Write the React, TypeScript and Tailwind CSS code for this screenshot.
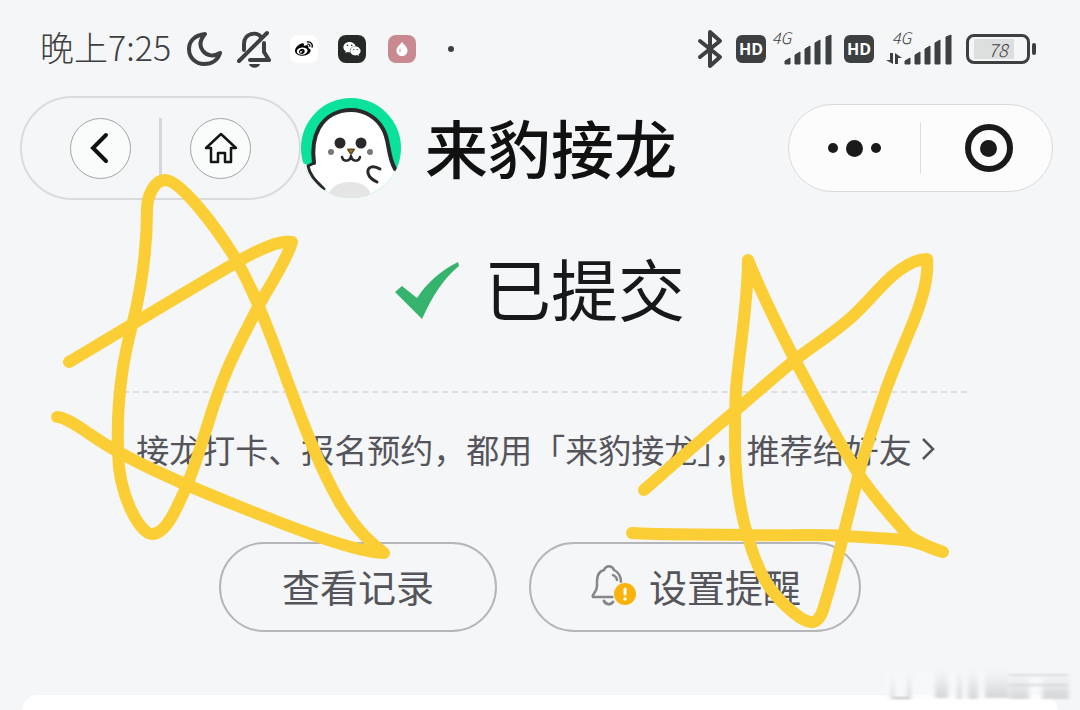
import React from 'react';
import { FaWeibo, FaWeixin } from 'react-icons/fa';

const MoonIcon = () => (
  <svg viewBox="0 0 36 36" className="h-9 w-9" fill="none" stroke="#3d4041" strokeWidth="4" strokeLinejoin="round">
    <path d="M19 3 C9 4 3 10 3 18 C3 27 10 33 18 33 C26 33 32 29 34 22 C28 26 21 25 17 20 C13 15 14 9 19 3 Z" />
  </svg>
);

const BellOffIcon = () => (
  <svg viewBox="0 0 36 40" className="h-10 w-9" fill="none" stroke="#3d4041" strokeWidth="4" strokeLinecap="round">
    <path d="M8 21 V15 C8 4 21 2 25 8" />
    <path d="M3 32 L31 4" />
    <path d="M28 14 V23 L33 31 H14" strokeLinejoin="round" />
    <path d="M13 35 H24 C23 40 14 40 13 35 Z" fill="#3d4041" stroke="none" />
  </svg>
);

const BluetoothIcon = () => (
  <svg viewBox="0 0 26 40" className="h-10 w-7" fill="none" stroke="#3d4041" strokeWidth="4" strokeLinejoin="round" strokeLinecap="round">
    <path d="M3 12 L23 28 L13 37 V3 L23 12 L3 28" />
  </svg>
);

const HdBadge = () => (
  <span className="flex h-7 w-[30px] items-center justify-center rounded-md bg-[#3d4041] font-['Open_Sans',sans-serif] text-base font-bold text-white">
    HD
  </span>
);

const SignalBars = () => (
  <svg viewBox="0 0 48 32" className="h-8 w-12" fill="#3d4041" stroke="#3d4041" strokeLinejoin="round">
    <path d="M1 31 V28 L6 25 V31 Z" />
    <path d="M11 31 V22 L16 19 V31 Z" />
    <path d="M21 31 V16 L26 13 V31 Z" />
    <path d="M31 31 V10 L36 7 V31 Z" />
    <path d="M42 31 V4 L47 2 V31 Z" />
  </svg>
);

const Signal: React.FC<{ arrows?: boolean }> = ({ arrows }) => (
  <div className={`relative flex items-end ${arrows ? 'ml-3' : 'ml-[18px]'}`}>
    <span className={`absolute -top-1 text-base leading-4 italic font-light ${arrows ? 'left-1.5' : '-left-3'}`}>4G</span>
    {arrows && (
      <svg viewBox="0 0 18 12" className="h-3 w-[18px]" fill="#3d4041">
        <path d="M4 0 H7 V11 L0 7 H4 Z" />
        <path d="M9 11 V0 L16 5 H12 V11 Z" />
      </svg>
    )}
    <SignalBars />
  </div>
);

const StatusBar = () => (
  <div className="flex h-[97px] items-center justify-between pr-11 pl-10 text-[#3d4041]">
    <div className="flex items-center">
      <span className="w-[146px] pb-1 text-[34px] leading-10 font-light whitespace-nowrap">晚上7:25</span>
      <MoonIcon />
      <span className="ml-3.5"><BellOffIcon /></span>
      <span className="ml-[18px] flex h-7 w-7 items-center justify-center rounded-lg bg-white text-black">
        <FaWeibo size={18} />
      </span>
      <span className="ml-5 flex h-7 w-7 items-center justify-center rounded-lg bg-[#252827] text-white">
        <FaWeixin size={18} />
      </span>
      <span className="ml-[22px] flex h-7 w-7 items-center justify-center rounded-lg bg-[#c98991]">
        <svg viewBox="0 0 12 14" className="h-3.5 w-3" fill="white">
          <path d="M6 0 C8 3 11.500 5 11.500 8.500 C11.500 12 9 14 6 14 C3 14 .5 12 .5 8.500 C.5 5 4 3 6 0 Z" />
          <path d="M4 7 V10" stroke="#c98991" />
        </svg>
      </span>
      <span className="ml-8 h-1.5 w-1.5 rounded-full bg-[#3d4041]" />
    </div>
    <div className="flex items-center">
      <BluetoothIcon />
      <span className="ml-3"><HdBadge /></span>
      <Signal />
      <span className="ml-3"><HdBadge /></span>
      <Signal arrows />
      <div className="ml-3.5 flex h-[30px] w-16 items-center justify-center rounded-lg border-3 border-[#3d4041]">
        <span className="mr-2 w-10 bg-[#dddede] pl-2 text-center text-lg leading-5 italic font-light">78</span>
      </div>
      <span className="ml-0.5 h-3 w-1 rounded-full bg-[#3d4041]" />
    </div>
  </div>
);

const SealAvatar = () => (
  <svg viewBox="0 0 100 100" className="h-[100px] w-[100px] shrink-0">
    <defs>
      <clipPath id="avatar">
        <circle cx="50" cy="50" r="50" />
      </clipPath>
    </defs>
    <g clipPath="url(#avatar)" fill="none" stroke="#29292b" strokeLinecap="round" strokeLinejoin="round">
      <rect width="100" height="100" fill="#0ae19a" stroke="none" />
      <path
        d="M-4 62 L8 68 L13 64 C11 50 13 39 18 30 C25 18 37 12 50 12 C64 12 76 20 82 31 C89 43 86 57 95 71 L110 75 V110 H-10 Z"
        fill="#fff"
        stroke="none"
      />
      <path d="M13 65 C11 50 13 39 18 30 C25 18 37 12 50 12 C64 12 76 20 82 31 C89 43 86 57 94 71" strokeWidth="4" />
      <path d="M13 65 L7 68 C9 78 15 83 23 91" strokeWidth="3" />
      <circle cx="39" cy="45" r="5.500" fill="#29292b" stroke="none" />
      <circle cx="60" cy="45" r="5.500" fill="#29292b" stroke="none" />
      <circle cx="30" cy="54" r="3" fill="#77777b" stroke="none" />
      <circle cx="69" cy="54" r="3" fill="#77777b" stroke="none" />
      <path d="M47 51.500 H53 L50 56 Z" fill="#c9983c" stroke="#6c5225" strokeWidth="2" />
      <path d="M41 59 C42 64 49 64 50 58 C51 64 58 64 59 59" strokeWidth="2.500" />
      <path d="M79 71 C71 66 66 70 67 75 C68 80 72 82 76 84" strokeWidth="3" />
      <ellipse cx="49" cy="98" rx="21" ry="14" fill="#e5e5e5" stroke="none" />
    </g>
  </svg>
);

const NavBar = () => (
  <header className="flex h-[102px] items-center pr-[27px] pl-5">
    <div className="flex h-[104px] w-[281px] shrink-0 items-center justify-center gap-7 rounded-full border-2 border-[#dadbdd]">
      <button aria-label="返回" className="flex h-[61px] w-[61px] items-center justify-center rounded-full border border-[#a4a5a6] bg-[#fafcfc]">
        <svg viewBox="0 0 20 32" className="mr-1 h-8 w-5" fill="none" stroke="#111" strokeWidth="4" strokeLinecap="round">
          <path d="M17 3 L4 16 L17 29" />
        </svg>
      </button>
      <span className="h-[60px] w-[3px] bg-[#d6d7d9]" />
      <button aria-label="首页" className="flex h-[61px] w-[61px] items-center justify-center rounded-full border border-[#a4a5a6] bg-[#fafcfc]">
        <svg viewBox="0 0 34 32" className="h-8 w-[34px]" fill="none" stroke="#161616" strokeWidth="2.500" strokeLinejoin="round">
          <path d="M17 2 L32 16 H27 V30 H21 V21 H14 V30 H7 V16 H2 Z" />
        </svg>
      </button>
    </div>
    <SealAvatar />
    <span className="ml-6 pb-1 text-[63px] leading-[80px] font-medium whitespace-nowrap text-[#111]">来豹接龙</span>
    <div className="ml-auto flex h-[88px] w-[265px] shrink-0 items-center rounded-full border border-[#d9dadc] bg-[#fcfcfc]">
      <button aria-label="更多" className="flex flex-1 items-center justify-center gap-2">
        <span className="h-2.5 w-2.5 rounded-full bg-[#1a1a1a]" />
        <span className="h-[17px] w-[17px] rounded-full bg-[#1a1a1a]" />
        <span className="h-2.5 w-2.5 rounded-full bg-[#1a1a1a]" />
      </button>
      <span className="h-[52px] w-px bg-[#dcdddf]" />
      <button aria-label="关闭" className="flex flex-1 items-center justify-center">
        <span className="ml-1 flex h-12 w-12 items-center justify-center rounded-full border-6 border-[#1a1a1a]">
          <span className="h-[17px] w-[17px] rounded-full bg-[#1a1a1a]" />
        </span>
      </button>
    </div>
  </header>
);

const BellAlertIcon = () => (
  <svg viewBox="0 0 48 42" className="h-[42px] w-12" fill="none" stroke="#858789" strokeWidth="2.500" strokeLinecap="round" strokeLinejoin="round">
    <path d="M24 33 H4 C2 31 8 29 8 22 V17 C8 11 11 7 15 6 C17 1 23 1 25 6 C29 8 32 12 32 18" />
    <path d="M24 11 C26 12 28 14 28 16" />
    <path d="M15 37 C17 41 22 41 24 38" strokeWidth="3" />
    <circle cx="36" cy="30" r="12" fill="#f4f6f8" stroke="none" />
    <circle cx="36" cy="30" r="11" fill="#fab30d" stroke="none" />
    <path d="M36 25 V30" stroke="#fff" strokeWidth="3" />
    <circle cx="36" cy="35" r="1.700" fill="#fff" stroke="none" />
  </svg>
);

// Hand drawn marker stars and the blurred stamp in the corner
const Doodles = () => (
  <svg viewBox="0 0 1080 710" className="pointer-events-none absolute top-0 left-0 w-full" fill="none" aria-hidden="true">
    <defs>
      <linearGradient id="smudge" x1="0" y1="0" x2="0" y2="1">
        <stop offset="0" stopColor="#d8d9da" stopOpacity="0" />
        <stop offset="1" stopColor="#d0d1d2" stopOpacity="0.9" />
      </linearGradient>
      <filter id="soften" x="-10%" y="-20%" width="120%" height="140%">
        <feGaussianBlur stdDeviation="2 1" />
      </filter>
    </defs>
    <g filter="url(#soften)">
      <rect x="886" y="672" width="182" height="27" fill="#fafafb" opacity="0.6" />
      <rect x="891" y="668" width="3" height="31" fill="url(#smudge)" />
      <rect x="907" y="668" width="4" height="31" fill="url(#smudge)" />
      <rect x="893" y="697" width="16" height="2" fill="#bbbcbd" />
      <rect x="935" y="668" width="13" height="30" fill="url(#smudge)" />
      <rect x="957" y="668" width="5" height="31" fill="url(#smudge)" />
      <rect x="968" y="668" width="10" height="31" fill="url(#smudge)" />
      <rect x="985" y="668" width="24" height="30" fill="url(#smudge)" />
      <rect x="1010" y="672" width="19" height="27" fill="url(#smudge)" />
      <rect x="1042" y="672" width="27" height="27" fill="url(#smudge)" />
      <path d="M1009 675 H1068 M1009 685 H1068 M1044 692 H1068" stroke="#d8d9da" strokeWidth="2" />
    </g>
    <g stroke="#fbce35" strokeWidth="12" strokeLinecap="round" strokeLinejoin="round">
      <path d="M69 362 C100 344 170 301 237 262 C258 250 278 240 292 242 C287 260 270 285 258 307 C240 343 226 364 207 427 C203 440 194 468 187 485 C175 513 165 534 152 534 C140 534 118 495 118 450 C117 420 119 372 133 322 C142 285 147 250 147 210 C147 195 155 180 165 180 C180 180 215 225 237 261 C250 285 262 310 287 380 C300 415 318 465 340 503 C355 527 365 538 384 553 C360 553 300 531 253 512 C210 495 155 473 117 451 C95 440 70 417 57 417" />
      <path d="M644 490 C660 476 703 438 735 411 C755 394 775 376 795 360 C815 344 838 331 857 312 C870 299 881 286 891 277 C902 267 916 259 927 259 C929 278 922 302 910 330 C903 347 895 365 887 387 C878 413 868 440 859 473 C855 489 848 515 843 537 C838 558 831 584 823 610 C820 619 815 623 811 622 C803 622 783 606 770 588 C759 572 753 555 748 537 C738 505 735 473 735 443 C735 425 735 405 736 390 C738 360 748 305 748 260 C760 290 778 327 795 360 C810 388 836 438 858 473 C873 496 890 515 908 535 C919 543 932 548 943 552 C932 549 921 543 910 541 C894 538 870 538 847 536 C815 534 780 536 747 535 C700 534 660 535 632 533" />
    </g>
  </svg>
);

const App: React.FC = () => {
  return (
    <div className="relative flex min-h-screen flex-col overflow-hidden bg-[#f4f6f8] font-['Noto_Sans_CJK_SC',sans-serif]">
      <StatusBar />
      <NavBar />

      <main className="flex flex-1 flex-col items-center">
        <div className="mt-11 flex items-center gap-6">
          <svg viewBox="0 0 65 58" className="h-[58px] w-[65px]">
            <path d="M0 30 L7 24 L22 36 C32 21 45 9 63 0 L64 4 C49 16 38 33 27 57 Z" fill="#36b36c" />
          </svg>
          <h1 className="pb-2 text-[67px] leading-[88px] font-normal text-[#17181a]">已提交</h1>
        </div>

        <div className="mt-[52px] w-[79%] border-t-2 border-dashed border-[#dcdee1]" />

        <a href="#" className="mt-8 flex items-center gap-2 pr-2 text-[33px] leading-[48px] whitespace-nowrap text-[#54545a]">
          <span>接龙打卡、报名预约，都用「来豹接龙」，推荐给好友</span>
          <svg viewBox="0 0 16 24" className="h-6 w-4" fill="none" stroke="#54545a" strokeWidth="2.500">
            <path d="M3 2 L13 12 L3 22" />
          </svg>
        </a>

        <div className="mt-[69px] flex gap-8">
          <button className="flex h-[90px] items-center rounded-full border-2 border-[#b4b6ba] px-[61px] pb-1 text-[38px] text-[#54545a]">
            查看记录
          </button>
          <button className="flex h-[90px] items-center gap-3 rounded-full border-2 border-[#b4b6ba] px-[58px] pb-1 text-[38px] text-[#54545a]">
            <BellAlertIcon />
            设置提醒
          </button>
        </div>

        <div className="mt-[63px] w-full flex-1 px-[22px]">
          <div className="h-4 rounded-t-2xl bg-white" />
        </div>
      </main>

      <Doodles />
    </div>
  );
};

export default App;
